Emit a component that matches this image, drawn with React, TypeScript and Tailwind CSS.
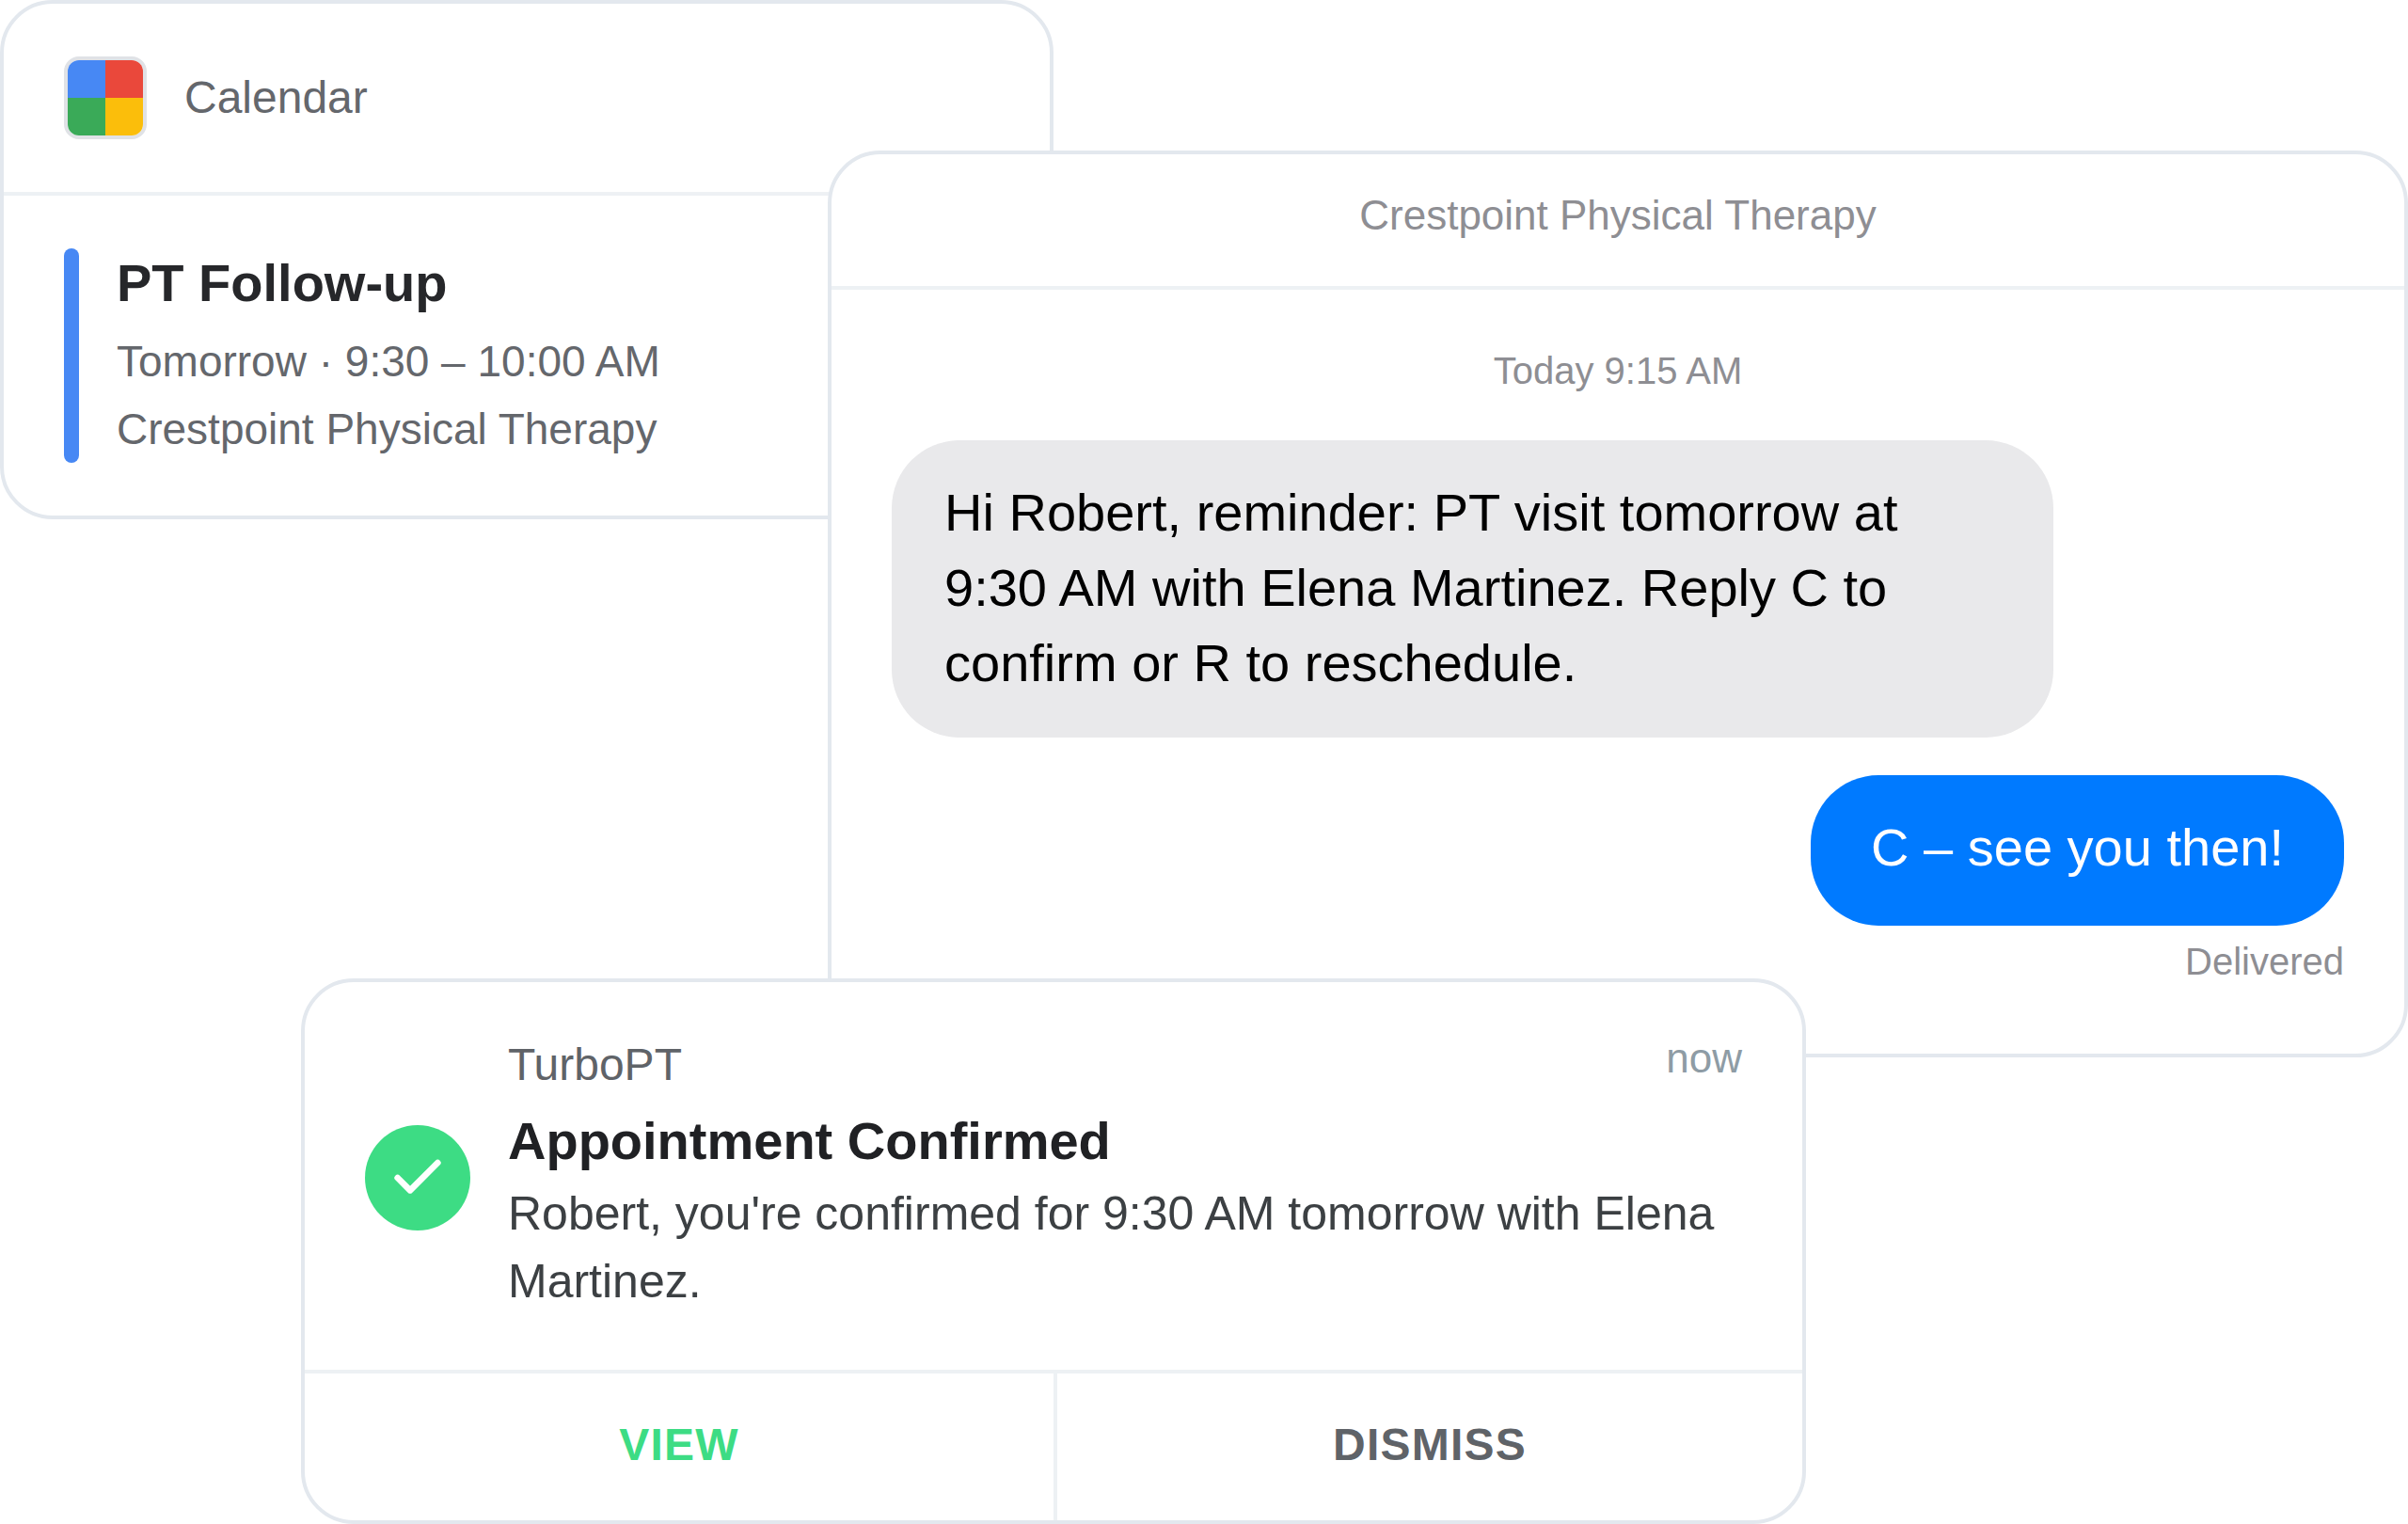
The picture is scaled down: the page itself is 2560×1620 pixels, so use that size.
import React from "react";

function CalendarIcon() {
  return (
    <div className="grid size-22 shrink-0 grid-cols-2 grid-rows-2 overflow-hidden rounded-2xl border-4 border-[#dfe2e6]">
      <span className="bg-[#4285f4]" />
      <span className="bg-[#ea4335]" />
      <span className="bg-[#34a853]" />
      <span className="bg-[#fbbc04]" />
    </div>
  );
}

function CalendarCard() {
  return (
    <article className="z-0 col-start-1 col-end-15 row-start-1 overflow-hidden rounded-[56px] border-4 border-[#e3e8ee] bg-white">
      <div className="opacity-[0.97]">
        <header className="flex items-center gap-10 border-b-4 border-[#edf1f4] px-16 py-14">
          <CalendarIcon />
          <span className="text-[48px] leading-[56px] text-[#5f6368]">Calendar</span>
        </header>
        <div className="flex gap-10 px-16 py-14">
          <span className="w-4 shrink-0 rounded-full bg-[#4285f4]" />
          <div className="text-[46px] leading-[72px] text-[#5f6368]">
            <h2 className="mb-[10px] text-[56px] leading-[74px] font-bold text-[#202124]">PT Follow-up</h2>
            <p>Tomorrow · 9:30 – 10:00 AM</p>
            <p>Crestpoint Physical Therapy</p>
          </div>
        </div>
      </div>
    </article>
  );
}

function MessagesCard() {
  return (
    <article className="z-10 col-start-12 col-end-33 row-start-1 mt-40 overflow-hidden rounded-[56px] border-4 border-[#e3e8ee] bg-white">
      <header className="border-b-4 border-[#edf1f4] px-16 pt-10 pb-[50px] text-center text-[44px] leading-[50px] text-[#8e8e93]">
        Crestpoint Physical Therapy
      </header>
      <div className="flex flex-col px-16 pt-16 pb-[76px]">
        <p className="mb-[52px] text-center text-[40px] leading-[44px] text-[#8e8e93]">Today 9:15 AM</p>
        <p className="w-4/5 self-start rounded-[72px] bg-[#e9e9eb] px-14 pt-[37px] pb-[39px] text-[56px] leading-[80px] text-black">
          Hi Robert, reminder: PT visit tomorrow at 9:30 AM with Elena Martinez. Reply C to confirm or R to
          reschedule.
        </p>
        <p className="mt-10 self-end rounded-[72px] bg-[#007aff] px-16 pt-[37px] pb-[43px] text-[56px] leading-[80px] text-white">
          C – see you then!
        </p>
        <p className="mt-4 self-end text-[40px] leading-[44px] text-[#8e8e93]">Delivered</p>
      </div>
    </article>
  );
}

function NotificationCard() {
  return (
    <article className="z-20 col-start-5 col-end-25 row-start-1 mt-[1040px] overflow-hidden rounded-[56px] border-4 border-[#e3e8ee] bg-white">
      <div className="flex items-center gap-10 px-16 pt-[60px] pb-[56px]">
        <div className="flex size-28 shrink-0 items-center justify-center rounded-full bg-[#3ddc84]">
          <svg
            viewBox="0 0 24 24"
            className="size-16"
            fill="none"
            stroke="white"
            strokeWidth="2.5"
            strokeLinecap="round"
            strokeLinejoin="round"
            aria-hidden="true"
          >
            <path d="M20 6L9 17l-5-5" />
          </svg>
        </div>
        <div className="flex-1">
          <div className="flex items-start justify-between">
            <span className="text-[48px] leading-[56px] text-[#5f6368]">TurboPT</span>
            <span className="text-[44px] leading-[42px] text-[#8e9ca5]">now</span>
          </div>
          <h2 className="mt-4 mb-1 text-[56px] leading-[74px] font-bold text-[#202124]">Appointment Confirmed</h2>
          <p className="pb-[2px] text-[50px] leading-[72px] text-[#3c4043]">
            Robert, you're confirmed for 9:30 AM tomorrow with Elena Martinez.
          </p>
        </div>
      </div>
      <div className="grid grid-cols-2 border-t-4 border-[#edf1f4] text-[48px] leading-[56px] font-bold tracking-wide">
        <button type="button" className="pt-12 pb-[52px] text-[#3ddc84]">
          VIEW
        </button>
        <button type="button" className="border-l-4 border-[#edf1f4] pt-12 pb-[52px] text-[#5f6368]">
          DISMISS
        </button>
      </div>
    </article>
  );
}

export default function App() {
  return (
    <main className="grid grid-cols-[repeat(32,minmax(0,1fr))] items-start bg-white font-['Liberation_Sans',Arial,sans-serif]">
      <CalendarCard />
      <MessagesCard />
      <NotificationCard />
    </main>
  );
}
